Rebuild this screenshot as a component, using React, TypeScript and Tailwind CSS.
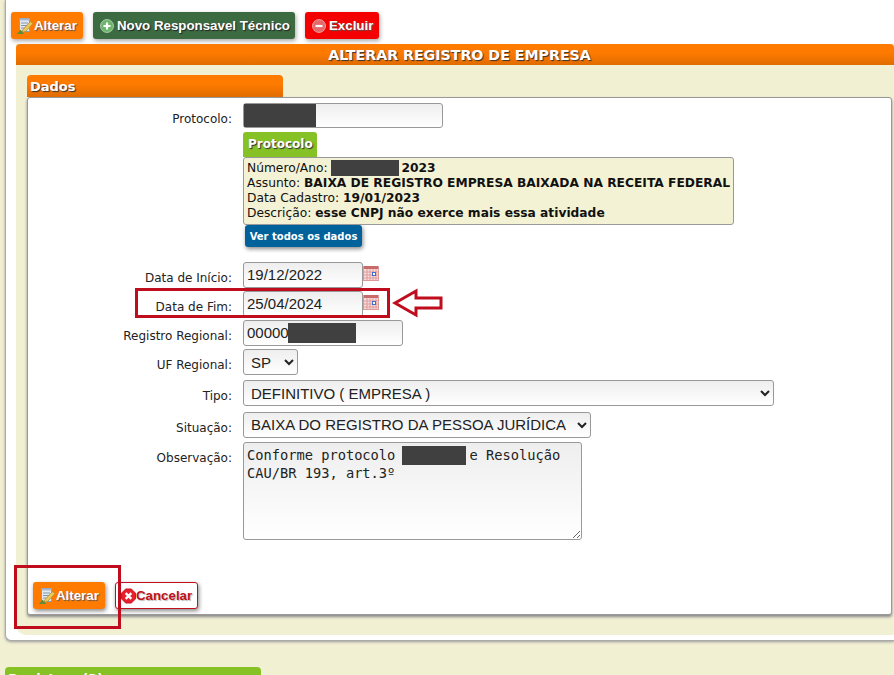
const VERDANA = { fontFamily: '"DejaVu Sans", Verdana, sans-serif' }

function NoteIcon() {
  return (
    <svg width="18" height="18" viewBox="0 0 18 18" className="shrink-0">
      <path d="M3.500 1.500h10v13h-10z" fill="#e3eaf2" stroke="#8c9bb0" />
      <path d="M3.500 1.500h10v2h-10z" fill="#a9b8cc" />
      <path d="M5 6h7M5 8.500h7M5 11h4" stroke="#8494a8" strokeWidth="1" />
      <path d="M7 12.500l7.500-8 2.500 2-7.500 8-3.500 1z" fill="#efc95a" stroke="#a88a30" strokeWidth="0.8" />
      <path d="M1 17l3.500-4.500 3.500 4.500z" fill="#5f8a3a" />
    </svg>
  )
}

function RoundIcon({ color, kind }: { color: string; kind: 'plus' | 'minus' }) {
  return (
    <svg width="14" height="14" viewBox="0 0 14 14" className="shrink-0">
      <circle cx="7" cy="7" r="6.500" fill={color} stroke="#ffffff" strokeOpacity="0.5" />
      <path d={kind === 'plus' ? 'M3.500 7h7M7 3.500v7' : 'M3.500 7h7'} stroke="#fff" strokeWidth="2.200" />
    </svg>
  )
}

function CancelIcon() {
  return (
    <svg width="15" height="16" viewBox="0 0 16 16" className="shrink-0">
      <path d="M5 .5h6L15.500 5v6L11 15.500H5L.5 11V5z" fill="#e8202c" stroke="#c0101c" />
      <path d="M5 5l6 6M11 5l-6 6" stroke="#fff" strokeWidth="2.600" />
    </svg>
  )
}

function CalendarIcon() {
  return (
    <svg width="16" height="16" viewBox="0 0 16 16" className="mt-[3px] shrink-0">
      <rect x="0.500" y="1.500" width="15" height="14" fill="#f8dcdc" stroke="#d99a9a" />
      <rect x="1" y="1" width="14" height="3" fill="#c96a6a" />
      <path d="M1 7h14M1 10h14M1 13h14M4 4v11M7 4v11M10 4v11M13 4v11" stroke="#e09a9a" strokeWidth="1" />
      <rect x="9.500" y="7.500" width="3" height="3" fill="#fff" stroke="#3b6fd0" />
    </svg>
  )
}

function Row({ label, h, children }: { label: string; h: number; children: React.ReactNode }) {
  return (
    <div className="flex" style={{ height: h }}>
      <div className="w-[204px] pt-[9px] text-right text-[12px] leading-[15px] text-[#222]" style={VERDANA}>{label}</div>
      <div className="ml-[11px] flex items-start">{children}</div>
    </div>
  )
}

const fieldCls =
  'h-[26px] rounded-[3px] border border-[#999] bg-gradient-to-b from-[#eeeeee] to-white px-[3px] text-[15px] text-[#222]'

export default function App() {
  return (
    <div className="relative h-[675px] w-[894px] overflow-hidden bg-[#f2f0d3]" style={{ fontFamily: '"Liberation Sans", Arial, sans-serif' }}>
      <div className="ml-[5px] h-[641px] rounded-bl-[6px] border-b border-l border-[#aaa] bg-white pt-[12px] shadow-[0_1px_3px_#999]">
        {/* Toolbar */}
        <div className="ml-[5px] flex gap-[10px]">
          <button className="flex h-[27px] w-[72px] items-center rounded-[3px] bg-[#ff7b00] pl-[5px] text-[13.300px] font-bold text-white shadow-[1px_2px_4px_#aaa] [text-shadow:1px_1px_1px_#555]">
            <NoteIcon />Alterar
          </button>
          <button className="flex h-[27px] w-[202px] items-center gap-[3px] whitespace-nowrap rounded-[3px] bg-[#3c6a41] pl-[7px] text-[13.300px] font-bold text-white shadow-[1px_2px_4px_#aaa] [text-shadow:1px_1px_1px_#222]">
            <RoundIcon color="#6cb56a" kind="plus" />Novo Responsavel Técnico
          </button>
          <button className="flex h-[27px] w-[74px] items-center gap-[3px] rounded-[3px] bg-[#f40000] pl-[7px] text-[13.300px] font-bold text-white shadow-[1px_2px_4px_#aaa] [text-shadow:1px_1px_1px_#555]">
            <RoundIcon color="#e26a6a" kind="minus" />Excluir
          </button>
        </div>

        {/* Painel principal */}
        <div className="ml-[10px] mt-[5px] h-[591px] rounded-bl-[10px] bg-[#f2f0d3]">
          <div className="h-[21px] rounded-t-[4px] bg-gradient-to-b from-[#ff7b00] from-40% to-[#e06c00] pl-[9px] text-center text-[14.200px] font-bold leading-[22px] text-white [text-shadow:1px_1px_1px_#333]" style={VERDANA}>
            ALTERAR REGISTRO DE EMPRESA
          </div>
          <div className="ml-[11px] mr-[2px] pt-[10px]">
            <div className="h-[22px] w-[256px] rounded-t-[4px] bg-gradient-to-b from-[#ff7b00] from-40% to-[#e06c00] pl-[3px] text-[13px] font-bold leading-[23px] text-white [text-shadow:1px_1px_1px_#333]" style={VERDANA}>
              Dados
            </div>
            <div className="relative h-[518px] rounded-[3px] border border-[#999] bg-white pt-[5px] shadow-[0_2px_3px_#888]">
              <Row label="Protocolo:" h={29}>
                <div className="relative h-[25px] w-[200px] rounded-[3px] border border-[#999] bg-gradient-to-b from-[#eeeeee] to-white">
                  <div className="absolute inset-y-0 left-0 w-[72px] bg-[#404040]" />
                </div>
              </Row>

              {/* Caixa do protocolo */}
              <div className="ml-[215px] h-[130px] text-[12.250px]" style={VERDANA}>
                <div className="h-[25px] w-[74px] rounded-t-[3px] bg-[#86c126] pl-[5px] text-[12px] font-bold leading-[25px] text-white [text-shadow:1px_1px_1px_#333]">
                  Protocolo
                </div>
                <div className="relative h-[68px] w-[491px] rounded-[3px] border border-[#999] bg-[#f4f2d4] pl-[3px] pt-[3px] leading-[15px] text-[#111]">
                  <div>Número/Ano: <span className="ml-[70px] font-bold">2023</span></div>
                  <div>Assunto: <b>BAIXA DE REGISTRO EMPRESA BAIXADA NA RECEITA FEDERAL</b></div>
                  <div>Data Cadastro: <b>19/01/2023</b></div>
                  <div>Descrição: <b>esse CNPJ não exerce mais essa atividade</b></div>
                  <div className="absolute left-[87px] top-[2px] h-[16px] w-[68px] bg-[#404040]" />
                </div>
                <div className="ml-[2px] flex h-[22px] w-[117px] items-center justify-center rounded-[3px] bg-[#00629a] text-[10px] font-bold text-white shadow-[1px_2px_4px_#888]">
                  Ver todos os dados
                </div>
              </div>

              <Row label="Data de Início:" h={29}>
                <input readOnly value="19/12/2022" className={`${fieldCls} w-[120px] pb-[2px]`} />
                <CalendarIcon />
              </Row>
              <Row label="Data de Fim:" h={29}>
                <input readOnly value="25/04/2024" className={`${fieldCls} w-[120px] pb-[2px]`} />
                <CalendarIcon />
              </Row>
              <Row label="Registro Regional:" h={29}>
                <div className="relative">
                  <input readOnly value="00000" className={`${fieldCls} w-[160px] pb-[2px]`} />
                  <div className="absolute left-[45px] top-[3px] h-[20px] w-[68px] bg-[#404040]" />
                </div>
              </Row>
              <Row label="UF Regional:" h={31}>
                <select className={`${fieldCls} w-[55px]`}><option>SP</option></select>
              </Row>
              <Row label="Tipo:" h={32}>
                <select className={`${fieldCls} w-[531px]`}><option>DEFINITIVO ( EMPRESA )</option></select>
              </Row>
              <Row label="Situação:" h={30}>
                <select className={`${fieldCls} w-[348px] pb-[2px]`}><option>BAIXA DO REGISTRO DA PESSOA JURÍDICA</option></select>
              </Row>
              <Row label="Observação:" h={98}>
                <div className="relative">
                  <textarea
                    readOnly
                    defaultValue={'Conforme protocolo         e Resolução\nCAU/BR 193, art.3º'}
                    className="block h-[98px] w-[339px] rounded-[3px] border border-[#999] bg-gradient-to-b from-[#eeeeee] to-white px-[3px] pt-[3px] text-[13.700px] leading-[18px] text-[#222]"
                    style={{ fontFamily: '"DejaVu Sans Mono", monospace' }}
                  />
                  <div className="absolute left-[159px] top-[4px] h-[19px] w-[64px] bg-[#404040]" />
                </div>
              </Row>

              {/* Acoes do formulario */}
              <div className="ml-[5px] mt-[42px] flex gap-[10px]">
                <button className="flex h-[27px] w-[72px] items-center rounded-[3px] bg-[#ff7b00] pl-[5px] text-[13.300px] font-bold text-white shadow-[1px_2px_4px_#888] [text-shadow:1px_1px_1px_#555]">
                  <NoteIcon />Alterar
                </button>
                <button className="flex h-[27px] w-[83px] items-center rounded-[3px] border border-[#c0101c] bg-white pl-[5px] text-[13.300px] font-bold text-[#c0101c] shadow-[1px_2px_4px_#888] [text-shadow:1px_1px_1px_#bbb]">
                  <CancelIcon />Cancelar
                </button>
              </div>
            </div>
          </div>
        </div>
      </div>

      {/* Proxima secao */}
      <div className="ml-[5px] mt-[26px] h-[20px] w-[256px] rounded-t-[4px] bg-[#86c126] pl-[3px] pt-[4px] text-[13px] font-bold leading-[16px] text-white" style={VERDANA}>
        Registros (3)
      </div>

      {/* Marcacoes em vermelho */}
      <div className="absolute left-[135px] top-[288px] h-[30px] w-[255px] border-[3px] border-[#c00d1e]" />
      <div className="absolute left-[14px] top-[565px] h-[64px] w-[107px] border-[3px] border-[#c00d1e]" />
      <svg className="absolute left-[392px] top-[286px]" width="52" height="34" viewBox="0 0 52 34">
        <path d="M3 17 L24 5 V12 H49 V22 H24 V29 Z" fill="#fff" stroke="#c00d1e" strokeWidth="3" />
      </svg>
    </div>
  )
}
